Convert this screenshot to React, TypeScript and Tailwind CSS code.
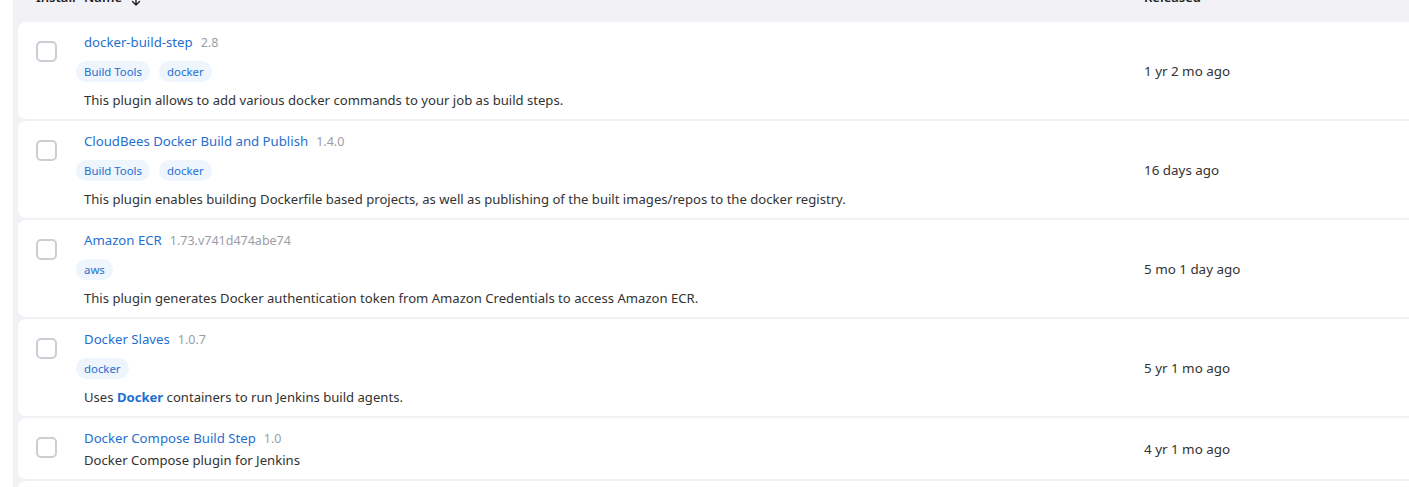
import React from "react"

type Plugin = {
  name: string
  version: string
  tags: string[]
  desc: React.ReactNode
  released: string
}

const plugins: Plugin[] = [
  {
    name: "docker-build-step",
    version: "2.8",
    tags: ["Build Tools", "docker"],
    desc: "This plugin allows to add various docker commands to your job as build steps.",
    released: "1 yr 2 mo ago",
  },
  {
    name: "CloudBees Docker Build and Publish",
    version: "1.4.0",
    tags: ["Build Tools", "docker"],
    desc: "This plugin enables building Dockerfile based projects, as well as publishing of the built images/repos to the docker registry.",
    released: "16 days ago",
  },
  {
    name: "Amazon ECR",
    version: "1.73.v741d474abe74",
    tags: ["aws"],
    desc: "This plugin generates Docker authentication token from Amazon Credentials to access Amazon ECR.",
    released: "5 mo 1 day ago",
  },
  {
    name: "Docker Slaves",
    version: "1.0.7",
    tags: ["docker"],
    desc: (
      <>
        Uses <b className="font-bold text-[#1f6fd1]">Docker</b> containers to run Jenkins build agents.
      </>
    ),
    released: "5 yr 1 mo ago",
  },
  {
    name: "Docker Compose Build Step",
    version: "1.0",
    tags: [],
    desc: "Docker Compose plugin for Jenkins",
    released: "4 yr 1 mo ago",
  },
]

function Row({ p }: { p: Plugin }) {
  return (
    <div className="flex items-stretch bg-white rounded-l-lg">
      <div className="w-[58px] shrink-0 pl-[18px] pt-[19px]">
        <div className="w-[21px] h-[21px] rounded-[5px] border-2 border-[#c9cfd4] bg-white" />
      </div>
      <div className={"w-[1068px] shrink-0 flex flex-col pt-[11px] " + (p.tags.length ? "pb-[10px]" : "pb-[10px]")}>
        <div className="pl-2 flex items-baseline gap-2 h-[20px]">
          <span className="text-[13.2px] text-[#1f6fd1]">{p.name}</span>
          <span className="text-[12.5px] text-[#9a9ea6]">{p.version}</span>
        </div>
        {p.tags.length > 0 && (
          <div className="flex gap-[9px] mt-[8px] mb-[9px]">
            {p.tags.map((t) => (
              <span key={t} className="h-[21px] leading-[21px] px-2 rounded-full bg-[#eef5fc] text-[11.4px] text-[#1f6fd1]">
                {t}
              </span>
            ))}
          </div>
        )}
        <div className={"pl-2 text-[13.1px] text-[#333] leading-[18px] " + (p.tags.length ? "" : "mt-[2px]")}>{p.desc}</div>
      </div>
      <div className="flex-1 flex items-center pt-[2px] text-[13.4px] text-[#333]">{p.released}</div>
    </div>
  )
}

export default function App() {
  return (
    <div className="h-[487px] overflow-hidden bg-white flex font-['Noto_Sans',sans-serif]">
      <div className="w-[13px] shrink-0 bg-white" />
      <div className="flex-1 bg-[#f2f2f6] pl-[5px] overflow-hidden">
        <div className="flex items-start h-[34px] -mt-[12px] text-[13px] font-semibold text-[#222] leading-[18px]">
          <div className="w-[58px] shrink-0 pl-[18px]">Install</div>
          <div className="w-[1068px] shrink-0 pl-2 flex items-center">
            Name
            <svg className="ml-[9px] mt-[3px]" width="10" height="14" viewBox="0 0 10 14" fill="none" stroke="#222" strokeWidth="1.4" strokeLinecap="round" strokeLinejoin="round">
              <path d="M5 1v12M1.5 9.5 5 13l3.5-3.5" />
            </svg>
          </div>
          <div>Released</div>
        </div>
        <div className="flex flex-col gap-[2px] w-[1420px]">
          {plugins.map((p) => (
            <Row key={p.name} p={p} />
          ))}
          <div className="h-[20px] bg-white rounded-l-lg" />
        </div>
      </div>
    </div>
  )
}
